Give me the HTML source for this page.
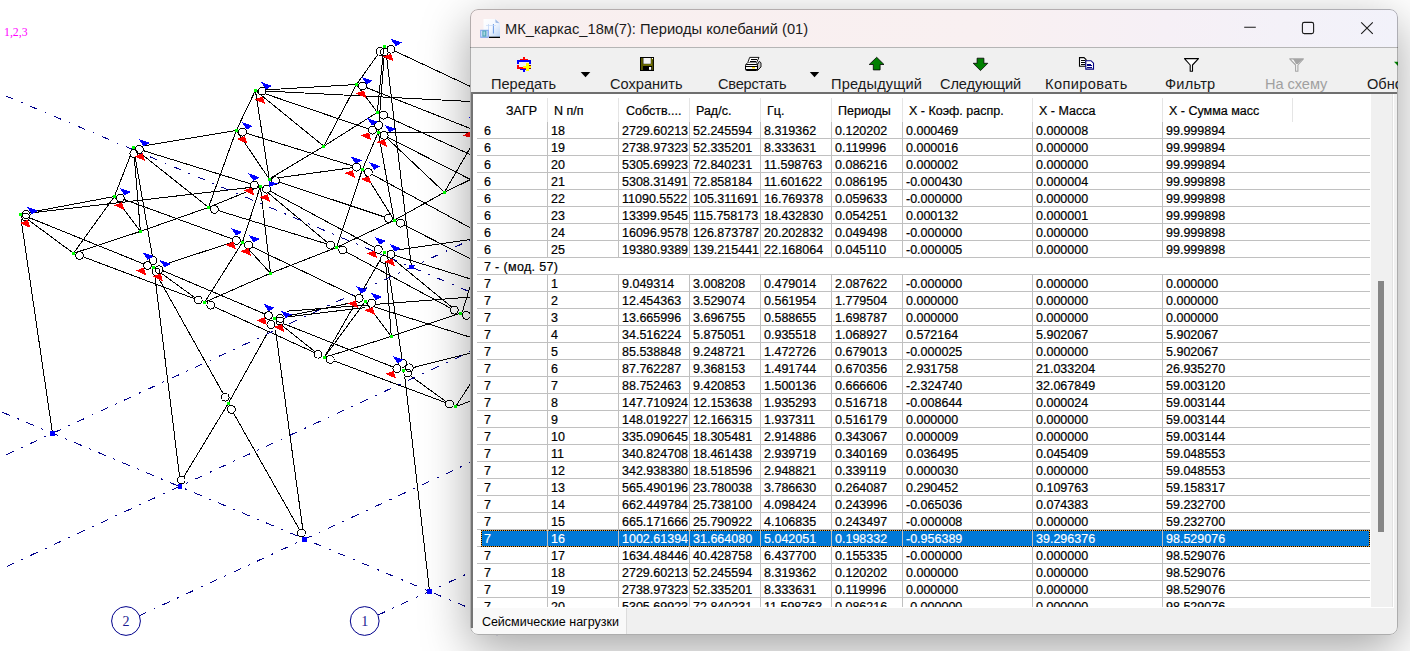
<!DOCTYPE html>
<html><head><meta charset="utf-8">
<style>
html,body{margin:0;padding:0;}
body{width:1410px;height:651px;overflow:hidden;background:#fff;position:relative;font-family:"Liberation Sans",sans-serif;}
#wire{position:absolute;left:0;top:0;width:1410px;height:651px;}
#dlg{position:absolute;left:470px;top:9px;width:927.8px;height:625.6px;border-radius:8px;background:#f0f0f0;
 box-shadow:0 14px 48px rgba(0,0,0,0.36);overflow:hidden;}
#title{position:absolute;left:0;top:0;width:926px;height:38px;background:linear-gradient(90deg,#f9efef 0%,#f9f0f1 55%,#f6f0f6 75%,#f2f2fa 100%);}
#title .t{position:absolute;left:34px;top:10px;font-size:15.2px;color:#1b1b1b;white-space:nowrap;line-height:18px;}
#tb{position:absolute;left:0;top:38px;width:926px;height:45px;background:#f0f0f0;border-top:1px solid #d9d9d9;box-sizing:border-box}
.btn{position:absolute;top:0;font-size:14.6px;color:#1a1a1a;white-space:nowrap;line-height:16px;}
.btn span{position:absolute;top:29px;left:0}
#list{position:absolute;left:0;top:83px;width:921px;height:515px;background:#fff;border-left:2px solid #6f6f6f;border-top:2px solid #6f6f6f;box-sizing:border-box;}
#abs{position:absolute;left:-470px;top:-9px;width:1410px;height:651px;}
#clip{position:absolute;left:473px;top:94px;width:898px;height:513px;overflow:hidden;}
#clip .in{position:absolute;left:-473px;top:-94px;width:1410px;height:651px;}
.r{z-index:0;position:absolute;left:0;width:1371px;height:16px;font-size:12.5px;line-height:16px;color:#000;}
.r .c{top:1px}
.g{z-index:2;position:absolute;left:477px;width:893px;height:16px;background:#fff}
.c{position:absolute;top:0;height:16px;overflow:hidden;white-space:nowrap;-webkit-text-stroke:0.2px currentColor;}
.sel{color:#fff;}
.selbg{z-index:-1;position:absolute;left:481px;top:0;width:889px;height:17px;background:#0078d7;box-shadow:inset 0 0 0 1px #f0a030;outline:1px dotted #000;outline-offset:-1px}
.hl{position:absolute;left:477px;width:893px;height:1px;background:#c0c0c0;}
.vl{z-index:1;position:absolute;top:122px;width:1px;height:490px;background:#c0c0c0;}
.vh{position:absolute;top:98px;width:1px;height:24px;background:#e5e5e5;}
.h{-webkit-text-stroke:0.2px #000;position:absolute;top:103px;font-size:12.5px;line-height:16px;color:#000;white-space:nowrap}
#sb{position:absolute;left:1371px;top:94px;width:21px;height:513px;background:#f0f0f0;}
#thumb{position:absolute;left:1378px;top:281px;width:6px;height:251px;background:#868686;}
#status{position:absolute;left:472.9px;top:608px;width:153px;height:26px;background:#f9f9f9;border-right:1px solid #dcdcdc;font-size:12.5px;line-height:16px;color:#000;}
</style></head><body>
<svg id="wire" width="1410" height="651" viewBox="0 0 1410 651">
<g stroke="#000" stroke-width="1" fill="none" shape-rendering="crispEdges">
<path d="M133.5 147.6L236.3 130.4"/>
<path d="M133.5 147.6L114.4 196.5"/>
<path d="M133.5 147.6L140.4 231.4"/>
<path d="M133.5 147.6L153.1 260.4"/>
<path d="M133.5 147.6L208.5 207.4"/>
<path d="M133.5 147.6L254.3 185.0"/>
<path d="M236.3 130.4L255.4 90.5"/>
<path d="M236.3 130.4L208.5 207.4"/>
<path d="M236.3 130.4L269.2 179.0"/>
<path d="M242.5 132.1L356.5 167.1"/>
<path d="M255.4 90.5L356.5 84.5"/>
<path d="M255.4 90.5L470.6 101.5"/>
<path d="M255.4 90.5L372.5 130.3"/>
<path d="M255.4 90.5L323.8 146.2"/>
<path d="M255.4 90.5L269.2 179.0"/>
<path d="M356.5 84.5L380.1 51.4"/>
<path d="M356.5 84.5L323.8 146.2"/>
<path d="M362.6 86.1L470.6 128.6"/>
<path d="M356.5 84.5L377.3 112.4"/>
<path d="M377.3 112.4L323.8 146.2"/>
<path d="M323.8 146.2L269.2 179.0"/>
<path d="M383.3 52.0L377.3 112.4"/>
<path d="M384.5 52.0L378.3 132.3"/>
<path d="M386.5 56.0L411.5 267.2"/>
<path d="M390.9 49.2L470.5 86.5"/>
<path d="M378.3 132.3L470.5 132.4"/>
<path d="M383.5 115.2L470.5 154.6"/>
<path d="M384.2 135.4L444.4 192.3"/>
<path d="M384.2 135.4L471.0 179.8"/>
<path d="M444.4 192.3L470.5 147.2"/>
<path d="M444.4 192.3L470.5 179.6"/>
<path d="M444.4 192.3L394.2 220.3"/>
<path d="M378.3 132.3L362.4 169.4"/>
<path d="M362.4 169.4L336.4 247.5"/>
<path d="M378.3 132.3L394.2 220.3"/>
<path d="M368.3 172.3L471.3 228.4"/>
<path d="M362.4 169.4L394.2 220.3"/>
<path d="M269.2 179.0L356.5 167.1"/>
<path d="M275.4 180.7L388.4 218.3"/>
<path d="M266.6 189.2L378.3 249.4"/>
<path d="M260.3 186.3L330.5 245.1"/>
<path d="M260.3 186.3L242.4 242.4"/>
<path d="M242.4 242.4L204.7 302.2"/>
<path d="M260.3 186.3L270.5 273.3"/>
<path d="M20.5 214.1L114.4 196.5"/>
<path d="M20.5 214.1L260.3 186.3"/>
<path d="M20.5 214.1L147.5 265.5"/>
<path d="M20.5 214.1L73.5 253.3"/>
<path d="M21.1 219.5L52.5 433.3"/>
<path d="M114.4 196.5L73.5 253.3"/>
<path d="M114.4 196.5L140.4 231.4"/>
<path d="M120.3 198.1L236.4 240.4"/>
<path d="M73.5 253.3L140.4 231.4"/>
<path d="M140.4 231.4L208.5 207.4"/>
<path d="M208.5 207.4L260.3 186.3"/>
<path d="M79.6 255.5L198.2 300.1"/>
<path d="M214.4 209.4L330.5 245.1"/>
<path d="M166.0 264.0L236.0 241.0"/>
<path d="M153.4 267.5L198.2 300.1"/>
<path d="M162.4 270.5L268.5 315.5"/>
<path d="M154.6 274.0L180.0 480.0"/>
<path d="M159.0 279.0L225.2 397.2"/>
<path d="M204.7 302.2L270.5 273.3"/>
<path d="M270.5 273.3L336.4 247.5"/>
<path d="M336.4 247.5L394.2 220.3"/>
<path d="M210.8 305.2L318.1 354.2"/>
<path d="M248.6 245.1L359.2 298.3"/>
<path d="M242.4 242.4L270.5 273.3"/>
<path d="M342.7 250.0L454.3 310.2"/>
<path d="M400.5 223.2L471.3 259.3"/>
<path d="M399.0 249.7L471.3 239.4"/>
<path d="M390.9 254.2L471.3 279.2"/>
<path d="M391.6 257.8L456.5 311.0"/>
<path d="M384.4 252.5L324.2 357.5"/>
<path d="M385.4 258.6L391.3 336.4"/>
<path d="M386.8 258.6L402.7 363.3"/>
<path d="M287.4 316.0L356.7 301.7"/>
<path d="M287.4 316.9L365.0 307.6"/>
<path d="M287.0 311.2L471.3 297.0"/>
<path d="M365.2 301.6L324.2 357.5"/>
<path d="M365.2 301.6L391.3 336.4"/>
<path d="M375.4 307.3L471.3 337.5"/>
<path d="M280.6 322.5L396.8 368.5"/>
<path d="M279.0 323.0L318.1 354.2"/>
<path d="M275.5 330.0L303.8 536.5"/>
<path d="M268.2 331.7L228.2 403.5"/>
<path d="M228.2 403.5L183.7 477.0"/>
<path d="M231.4 409.4L301.4 533.0"/>
<path d="M324.2 357.5L391.3 336.4"/>
<path d="M391.3 336.4L460.5 313.2"/>
<path d="M330.3 359.5L449.4 404.0"/>
<path d="M408.6 374.5L449.4 404.0"/>
<path d="M412.3 367.8L470.7 353.0"/>
<path d="M404.8 377.0L429.3 589.0"/>
<path d="M455.5 406.7L470.7 383.4"/>
<path d="M455.5 406.7L470.7 401.0"/>
<path d="M462.4 311.7L470.5 285.2"/>
</g>
<g stroke="#00008b" stroke-width="1" fill="none" stroke-dasharray="8 8 2 8" shape-rendering="crispEdges">
<path d="M6.0 96.0L471.0 292.3"/>
<path d="M6.3 454.7L471.3 239.5"/>
<path d="M2.5 412.3L471.3 608.9"/>
<path d="M6.6 566.5L470.7 351.5"/>
<path d="M139.0 615.8L471.0 462.2"/>
<path d="M377.7 615.2L471.3 571.9"/>
</g>
<g stroke="#000" stroke-width="1" fill="#fff" shape-rendering="crispEdges">
<circle cx="139.4" cy="149.4" r="3.9" stroke="none"/>
<circle cx="133.8" cy="153.6" r="3.9" stroke="none"/>
<circle cx="120.3" cy="198.1" r="3.9" stroke="none"/>
<circle cx="26.2" cy="214.5" r="3.9" stroke="none"/>
<circle cx="25.7" cy="217.0" r="3.9" stroke="none"/>
<circle cx="242.5" cy="132.1" r="3.9" stroke="none"/>
<circle cx="262.1" cy="91.1" r="3.9" stroke="none"/>
<circle cx="362.6" cy="86.1" r="3.9" stroke="none"/>
<circle cx="380.1" cy="51.4" r="3.9" stroke="none"/>
<circle cx="390.9" cy="49.2" r="3.9" stroke="none"/>
<circle cx="384.2" cy="52.1" r="3.9" stroke="none"/>
<circle cx="383.5" cy="115.2" r="3.9" stroke="none"/>
<circle cx="372.4" cy="130.2" r="3.9" stroke="none"/>
<circle cx="378.6" cy="125.4" r="3.9" stroke="none"/>
<circle cx="384.2" cy="135.4" r="3.9" stroke="none"/>
<circle cx="356.5" cy="167.1" r="3.9" stroke="none"/>
<circle cx="368.3" cy="172.3" r="3.9" stroke="none"/>
<circle cx="254.3" cy="185.0" r="3.9" stroke="none"/>
<circle cx="275.4" cy="180.7" r="3.9" stroke="none"/>
<circle cx="266.6" cy="189.2" r="3.9" stroke="none"/>
<circle cx="388.4" cy="218.3" r="3.9" stroke="none"/>
<circle cx="400.5" cy="223.2" r="3.9" stroke="none"/>
<circle cx="330.5" cy="245.1" r="3.9" stroke="none"/>
<circle cx="342.7" cy="250.0" r="3.9" stroke="none"/>
<circle cx="378.3" cy="249.4" r="3.9" stroke="none"/>
<circle cx="390.9" cy="254.2" r="3.9" stroke="none"/>
<circle cx="384.2" cy="259.3" r="3.9" stroke="none"/>
<circle cx="236.4" cy="240.4" r="3.9" stroke="none"/>
<circle cx="248.6" cy="245.1" r="3.9" stroke="none"/>
<circle cx="359.2" cy="298.3" r="3.9" stroke="none"/>
<circle cx="371.6" cy="303.3" r="3.9" stroke="none"/>
<circle cx="268.5" cy="315.5" r="3.9" stroke="none"/>
<circle cx="270.9" cy="324.5" r="3.9" stroke="none"/>
<circle cx="280.3" cy="318.5" r="3.9" stroke="none"/>
<circle cx="280.0" cy="321.0" r="3.9" stroke="none"/>
<circle cx="454.3" cy="310.2" r="3.9" stroke="none"/>
<circle cx="466.4" cy="315.4" r="3.9" stroke="none"/>
<circle cx="79.6" cy="255.5" r="3.9" stroke="none"/>
<circle cx="147.5" cy="265.5" r="3.9" stroke="none"/>
<circle cx="153.1" cy="260.4" r="3.9" stroke="none"/>
<circle cx="159.0" cy="269.7" r="3.9" stroke="none"/>
<circle cx="156.0" cy="271.9" r="3.9" stroke="none"/>
<circle cx="214.4" cy="209.4" r="3.9" stroke="none"/>
<circle cx="198.2" cy="300.1" r="3.9" stroke="none"/>
<circle cx="210.8" cy="305.2" r="3.9" stroke="none"/>
<circle cx="318.1" cy="354.2" r="3.9" stroke="none"/>
<circle cx="330.3" cy="359.5" r="3.9" stroke="none"/>
<circle cx="396.8" cy="368.5" r="3.9" stroke="none"/>
<circle cx="402.7" cy="363.3" r="3.9" stroke="none"/>
<circle cx="409.3" cy="367.8" r="3.9" stroke="none"/>
<circle cx="407.8" cy="372.9" r="3.9" stroke="none"/>
<circle cx="449.4" cy="404.0" r="3.9" stroke="none"/>
<circle cx="225.2" cy="397.2" r="3.9" stroke="none"/>
<circle cx="231.4" cy="409.4" r="3.9" stroke="none"/>
<circle cx="181.2" cy="480.0" r="3.9" stroke="none"/>
<circle cx="301.4" cy="533.0" r="3.9" stroke="none"/>
<circle cx="139.4" cy="149.4" r="3.9" fill="none"/>
<circle cx="133.8" cy="153.6" r="3.9" fill="none"/>
<circle cx="120.3" cy="198.1" r="3.9" fill="none"/>
<circle cx="26.2" cy="214.5" r="3.9" fill="none"/>
<circle cx="25.7" cy="217.0" r="3.9" fill="none"/>
<circle cx="242.5" cy="132.1" r="3.9" fill="none"/>
<circle cx="262.1" cy="91.1" r="3.9" fill="none"/>
<circle cx="362.6" cy="86.1" r="3.9" fill="none"/>
<circle cx="380.1" cy="51.4" r="3.9" fill="none"/>
<circle cx="390.9" cy="49.2" r="3.9" fill="none"/>
<circle cx="384.2" cy="52.1" r="3.9" fill="none"/>
<circle cx="383.5" cy="115.2" r="3.9" fill="none"/>
<circle cx="372.4" cy="130.2" r="3.9" fill="none"/>
<circle cx="378.6" cy="125.4" r="3.9" fill="none"/>
<circle cx="384.2" cy="135.4" r="3.9" fill="none"/>
<circle cx="356.5" cy="167.1" r="3.9" fill="none"/>
<circle cx="368.3" cy="172.3" r="3.9" fill="none"/>
<circle cx="254.3" cy="185.0" r="3.9" fill="none"/>
<circle cx="275.4" cy="180.7" r="3.9" fill="none"/>
<circle cx="266.6" cy="189.2" r="3.9" fill="none"/>
<circle cx="388.4" cy="218.3" r="3.9" fill="none"/>
<circle cx="400.5" cy="223.2" r="3.9" fill="none"/>
<circle cx="330.5" cy="245.1" r="3.9" fill="none"/>
<circle cx="342.7" cy="250.0" r="3.9" fill="none"/>
<circle cx="378.3" cy="249.4" r="3.9" fill="none"/>
<circle cx="390.9" cy="254.2" r="3.9" fill="none"/>
<circle cx="384.2" cy="259.3" r="3.9" fill="none"/>
<circle cx="236.4" cy="240.4" r="3.9" fill="none"/>
<circle cx="248.6" cy="245.1" r="3.9" fill="none"/>
<circle cx="359.2" cy="298.3" r="3.9" fill="none"/>
<circle cx="371.6" cy="303.3" r="3.9" fill="none"/>
<circle cx="268.5" cy="315.5" r="3.9" fill="none"/>
<circle cx="270.9" cy="324.5" r="3.9" fill="none"/>
<circle cx="280.3" cy="318.5" r="3.9" fill="none"/>
<circle cx="280.0" cy="321.0" r="3.9" fill="none"/>
<circle cx="454.3" cy="310.2" r="3.9" fill="none"/>
<circle cx="466.4" cy="315.4" r="3.9" fill="none"/>
<circle cx="79.6" cy="255.5" r="3.9" fill="none"/>
<circle cx="147.5" cy="265.5" r="3.9" fill="none"/>
<circle cx="153.1" cy="260.4" r="3.9" fill="none"/>
<circle cx="159.0" cy="269.7" r="3.9" fill="none"/>
<circle cx="156.0" cy="271.9" r="3.9" fill="none"/>
<circle cx="214.4" cy="209.4" r="3.9" fill="none"/>
<circle cx="198.2" cy="300.1" r="3.9" fill="none"/>
<circle cx="210.8" cy="305.2" r="3.9" fill="none"/>
<circle cx="318.1" cy="354.2" r="3.9" fill="none"/>
<circle cx="330.3" cy="359.5" r="3.9" fill="none"/>
<circle cx="396.8" cy="368.5" r="3.9" fill="none"/>
<circle cx="402.7" cy="363.3" r="3.9" fill="none"/>
<circle cx="409.3" cy="367.8" r="3.9" fill="none"/>
<circle cx="407.8" cy="372.9" r="3.9" fill="none"/>
<circle cx="449.4" cy="404.0" r="3.9" fill="none"/>
<circle cx="225.2" cy="397.2" r="3.9" fill="none"/>
<circle cx="231.4" cy="409.4" r="3.9" fill="none"/>
<circle cx="181.2" cy="480.0" r="3.9" fill="none"/>
<circle cx="301.4" cy="533.0" r="3.9" fill="none"/>
</g>
<g fill="#0000ff" shape-rendering="crispEdges">
<path d="M138.5 138.8L149.8 142.8L143.7 146.4Z"/>
<path d="M119.5 187.8L130.8 191.8L124.7 195.4Z"/>
<path d="M26.6 206.7L37.9 210.7L31.8 214.3Z"/>
<path d="M241.6 122.0L252.9 126.0L246.8 129.6Z"/>
<path d="M260.8 81.9L272.1 85.9L266.0 89.5Z"/>
<path d="M361.4 76.8L372.7 80.8L366.6 84.4Z"/>
<path d="M390.5 38.6L401.8 42.6L395.7 46.2Z"/>
<path d="M366.9 117.9L378.2 121.9L372.1 125.5Z"/>
<path d="M384.6 124.9L395.9 128.9L389.8 132.5Z"/>
<path d="M350.6 156.3L361.9 160.3L355.8 163.9Z"/>
<path d="M369.1 162.2L380.4 166.2L374.3 169.8Z"/>
<path d="M248.3 173.3L259.6 177.3L253.5 180.9Z"/>
<path d="M231.0 228.0L242.3 232.0L236.2 235.6Z"/>
<path d="M248.5 234.8L259.8 238.8L253.7 242.4Z"/>
<path d="M374.7 237.0L386.0 241.0L379.9 244.6Z"/>
<path d="M389.7 244.1L401.0 248.1L394.9 251.7Z"/>
<path d="M356.0 286.0L367.3 290.0L361.2 293.6Z"/>
<path d="M370.6 292.7L381.9 296.7L375.8 300.3Z"/>
<path d="M263.4 303.7L274.7 307.7L268.6 311.3Z"/>
<path d="M280.6 310.5L291.9 314.5L285.8 318.1Z"/>
<path d="M142.5 252.3L153.8 256.3L147.7 259.9Z"/>
<path d="M159.4 259.9L170.7 263.9L164.6 267.5Z"/>
<path d="M392.4 355.8L403.7 359.8L397.6 363.4Z"/>
<path d="M268.6 181L278 183.6L268.6 187Z"/><path d="M469 116.5L472 118L472 123.5Z"/>
</g>
<g fill="#ff0000" shape-rendering="crispEdges">
<path d="M462.6 135.6L471.5 130.7L471.5 138Z"/>
<path d="M134.5 156.3L142.6 153.3L145.1 161.1Z"/>
<path d="M113.9 205.3L122.0 202.3L124.5 210.1Z"/>
<path d="M19.7 223.0L27.8 220.0L30.3 227.8Z"/>
<path d="M236.8 139.0L244.9 136.0L247.4 143.8Z"/>
<path d="M254.7 99.4L262.8 96.4L265.3 104.2Z"/>
<path d="M355.8 93.4L363.9 90.4L366.4 98.2Z"/>
<path d="M382.9 56.6L391.0 53.6L393.5 61.4Z"/>
<path d="M360.8 135.5L368.9 132.5L371.4 140.3Z"/>
<path d="M376.6 142.1L384.7 139.1L387.2 146.9Z"/>
<path d="M344.6 173.1L352.7 170.1L355.2 177.9Z"/>
<path d="M360.8 179.0L368.9 176.0L371.4 183.8Z"/>
<path d="M243.6 190.5L251.7 187.5L254.2 195.3Z"/>
<path d="M259.6 197.2L267.7 194.2L270.2 202.0Z"/>
<path d="M225.4 244.7L233.5 241.7L236.0 249.5Z"/>
<path d="M240.4 251.1L248.5 248.1L251.0 255.9Z"/>
<path d="M366.7 253.5L374.8 250.5L377.3 258.3Z"/>
<path d="M384.4 261.6L392.5 258.6L395.0 266.4Z"/>
<path d="M347.6 303.4L355.7 300.4L358.2 308.2Z"/>
<path d="M364.5 310.2L372.6 307.2L375.1 315.0Z"/>
<path d="M256.4 320.3L264.5 317.3L267.0 325.1Z"/>
<path d="M273.7 327.1L281.8 324.1L284.3 331.9Z"/>
<path d="M135.6 270.6L143.7 267.6L146.2 275.4Z"/>
<path d="M152.5 276.6L160.6 273.6L163.1 281.4Z"/>
<path d="M385.4 373.8L393.5 370.8L396.0 378.6Z"/>
</g>
<g fill="#00ff00" shape-rendering="crispEdges">
<rect x="132.0" y="146.1" width="3" height="3"/>
<rect x="112.9" y="195.0" width="3" height="3"/>
<rect x="19.0" y="212.6" width="3" height="3"/>
<rect x="138.9" y="229.9" width="3" height="3"/>
<rect x="72.0" y="251.8" width="3" height="3"/>
<rect x="151.9" y="266.0" width="3" height="3"/>
<rect x="207.0" y="205.9" width="3" height="3"/>
<rect x="203.2" y="300.7" width="3" height="3"/>
<rect x="234.8" y="128.9" width="3" height="3"/>
<rect x="253.9" y="89.0" width="3" height="3"/>
<rect x="355.0" y="83.0" width="3" height="3"/>
<rect x="382.7" y="44.8" width="3" height="3"/>
<rect x="375.8" y="110.9" width="3" height="3"/>
<rect x="376.8" y="130.8" width="3" height="3"/>
<rect x="322.3" y="144.7" width="3" height="3"/>
<rect x="258.8" y="184.8" width="3" height="3"/>
<rect x="267.7" y="177.5" width="3" height="3"/>
<rect x="360.9" y="167.9" width="3" height="3"/>
<rect x="442.9" y="190.8" width="3" height="3"/>
<rect x="392.7" y="218.8" width="3" height="3"/>
<rect x="334.9" y="246.0" width="3" height="3"/>
<rect x="382.9" y="251.0" width="3" height="3"/>
<rect x="240.9" y="240.9" width="3" height="3"/>
<rect x="269.0" y="271.8" width="3" height="3"/>
<rect x="363.7" y="300.1" width="3" height="3"/>
<rect x="272.8" y="317.0" width="3" height="3"/>
<rect x="459.0" y="311.7" width="3" height="3"/>
<rect x="322.7" y="356.0" width="3" height="3"/>
<rect x="389.8" y="334.9" width="3" height="3"/>
<rect x="401.9" y="369.0" width="3" height="3"/>
<rect x="454.0" y="405.2" width="3" height="3"/>
<rect x="226.7" y="402.0" width="3" height="3"/>
</g>
<g fill="#0000ff" shape-rendering="crispEdges">
<rect x="50.3" y="431.1" width="4.4" height="4.4"/>
<rect x="177.8" y="484.1" width="4.4" height="4.4"/>
<rect x="302.1" y="537.1" width="4.4" height="4.4"/>
<rect x="427.1" y="589.1" width="4.4" height="4.4"/>
<rect x="409.3" y="265.0" width="4.4" height="4.4"/>
</g>
<g stroke="#00008b" stroke-width="1" fill="#fff"><circle cx="497" cy="620.3" r="14.4"/><circle cx="126" cy="621" r="14.4"/><circle cx="364.7" cy="621" r="14.4"/></g>
<g font-family="Liberation Serif, serif" font-size="14" fill="#1a1a90" text-anchor="middle"><text x="126" y="626">2</text><text x="364.7" y="626">1</text></g>
<text x="4" y="36" font-family="Liberation Serif, serif" font-size="11.8" fill="#ff00ff">1,2,3</text>
</svg>
<div id="dlg"><div id="abs">
 <div id="title" style="left:470px;top:9px;height:39px;width:928px"></div>
 <div id="tbar" style="position:absolute;left:470px;top:47px;width:928px;height:45px;background:#f0f0f0;border-top:1px solid #b5b5b5;box-sizing:border-box"></div>
 <div style="position:absolute;left:471px;top:92px;width:926px;height:2px;background:#6f6f6f"></div>
 <div style="position:absolute;left:471.4px;top:92px;width:1.5px;height:536px;background:#747474"></div>
 <div style="position:absolute;left:473px;top:94px;width:898px;height:513px;background:#fff"></div>
 <div id="sb"></div><div id="thumb"></div>
 <div style="position:absolute;left:1392px;top:94px;width:1px;height:513px;background:#e3e3e3"></div>
 <div style="position:absolute;left:1393px;top:94px;width:1px;height:513px;background:#fff"></div>
 <div style="position:absolute;left:473px;top:607px;width:921px;height:1px;background:#fff"></div>
 <div id="clip"><div class="in">
<div class="hl" style="top:138px"></div>
<div class="hl" style="top:155px"></div>
<div class="hl" style="top:172px"></div>
<div class="hl" style="top:189px"></div>
<div class="hl" style="top:206px"></div>
<div class="hl" style="top:223px"></div>
<div class="hl" style="top:240px"></div>
<div class="hl" style="top:257px"></div>
<div class="hl" style="top:274px"></div>
<div class="hl" style="top:291px"></div>
<div class="hl" style="top:308px"></div>
<div class="hl" style="top:325px"></div>
<div class="hl" style="top:342px"></div>
<div class="hl" style="top:359px"></div>
<div class="hl" style="top:376px"></div>
<div class="hl" style="top:393px"></div>
<div class="hl" style="top:410px"></div>
<div class="hl" style="top:427px"></div>
<div class="hl" style="top:444px"></div>
<div class="hl" style="top:461px"></div>
<div class="hl" style="top:478px"></div>
<div class="hl" style="top:495px"></div>
<div class="hl" style="top:512px"></div>
<div class="hl" style="top:529px"></div>
<div class="hl" style="top:546px"></div>
<div class="hl" style="top:563px"></div>
<div class="hl" style="top:580px"></div>
<div class="hl" style="top:597px"></div>
<div class="vl" style="left:547px"></div>
<div class="vh" style="left:547px"></div>
<div class="vl" style="left:618px"></div>
<div class="vh" style="left:618px"></div>
<div class="vl" style="left:689px"></div>
<div class="vh" style="left:689px"></div>
<div class="vl" style="left:760px"></div>
<div class="vh" style="left:760px"></div>
<div class="vl" style="left:831px"></div>
<div class="vh" style="left:831px"></div>
<div class="vl" style="left:902px"></div>
<div class="vh" style="left:902px"></div>
<div class="vl" style="left:1032px"></div>
<div class="vh" style="left:1032px"></div>
<div class="vl" style="left:1162px"></div>
<div class="vh" style="left:1162px"></div>
<div class="vh" style="left:1292px"></div>
<div class="r" style="top:122px"><div class="c" style="left:477px;width:63px;padding-left:7px">6</div><div class="c" style="left:548px;width:67px;padding-left:3px">18</div><div class="c" style="left:619px;width:67px;padding-left:3px">2729.60213</div><div class="c" style="left:690px;width:67px;padding-left:3px">52.245594</div><div class="c" style="left:761px;width:67px;padding-left:3px">8.319362</div><div class="c" style="left:832px;width:67px;padding-left:3px">0.120202</div><div class="c" style="left:903px;width:126px;padding-left:3px">0.000469</div><div class="c" style="left:1033px;width:126px;padding-left:3px">0.000008</div><div class="c" style="left:1163px;width:126px;padding-left:3px">99.999894</div></div>
<div class="r" style="top:139px"><div class="c" style="left:477px;width:63px;padding-left:7px">6</div><div class="c" style="left:548px;width:67px;padding-left:3px">19</div><div class="c" style="left:619px;width:67px;padding-left:3px">2738.97323</div><div class="c" style="left:690px;width:67px;padding-left:3px">52.335201</div><div class="c" style="left:761px;width:67px;padding-left:3px">8.333631</div><div class="c" style="left:832px;width:67px;padding-left:3px">0.119996</div><div class="c" style="left:903px;width:126px;padding-left:3px">0.000016</div><div class="c" style="left:1033px;width:126px;padding-left:3px">0.000000</div><div class="c" style="left:1163px;width:126px;padding-left:3px">99.999894</div></div>
<div class="r" style="top:156px"><div class="c" style="left:477px;width:63px;padding-left:7px">6</div><div class="c" style="left:548px;width:67px;padding-left:3px">20</div><div class="c" style="left:619px;width:67px;padding-left:3px">5305.69923</div><div class="c" style="left:690px;width:67px;padding-left:3px">72.840231</div><div class="c" style="left:761px;width:67px;padding-left:3px">11.598763</div><div class="c" style="left:832px;width:67px;padding-left:3px">0.086216</div><div class="c" style="left:903px;width:126px;padding-left:3px">0.000002</div><div class="c" style="left:1033px;width:126px;padding-left:3px">0.000000</div><div class="c" style="left:1163px;width:126px;padding-left:3px">99.999894</div></div>
<div class="r" style="top:173px"><div class="c" style="left:477px;width:63px;padding-left:7px">6</div><div class="c" style="left:548px;width:67px;padding-left:3px">21</div><div class="c" style="left:619px;width:67px;padding-left:3px">5308.31491</div><div class="c" style="left:690px;width:67px;padding-left:3px">72.858184</div><div class="c" style="left:761px;width:67px;padding-left:3px">11.601622</div><div class="c" style="left:832px;width:67px;padding-left:3px">0.086195</div><div class="c" style="left:903px;width:126px;padding-left:3px">-0.000430</div><div class="c" style="left:1033px;width:126px;padding-left:3px">0.000004</div><div class="c" style="left:1163px;width:126px;padding-left:3px">99.999898</div></div>
<div class="r" style="top:190px"><div class="c" style="left:477px;width:63px;padding-left:7px">6</div><div class="c" style="left:548px;width:67px;padding-left:3px">22</div><div class="c" style="left:619px;width:67px;padding-left:3px">11090.5522</div><div class="c" style="left:690px;width:67px;padding-left:3px">105.311691</div><div class="c" style="left:761px;width:67px;padding-left:3px">16.769378</div><div class="c" style="left:832px;width:67px;padding-left:3px">0.059633</div><div class="c" style="left:903px;width:126px;padding-left:3px">-0.000000</div><div class="c" style="left:1033px;width:126px;padding-left:3px">0.000000</div><div class="c" style="left:1163px;width:126px;padding-left:3px">99.999898</div></div>
<div class="r" style="top:207px"><div class="c" style="left:477px;width:63px;padding-left:7px">6</div><div class="c" style="left:548px;width:67px;padding-left:3px">23</div><div class="c" style="left:619px;width:67px;padding-left:3px">13399.9545</div><div class="c" style="left:690px;width:67px;padding-left:3px">115.758173</div><div class="c" style="left:761px;width:67px;padding-left:3px">18.432830</div><div class="c" style="left:832px;width:67px;padding-left:3px">0.054251</div><div class="c" style="left:903px;width:126px;padding-left:3px">0.000132</div><div class="c" style="left:1033px;width:126px;padding-left:3px">0.000001</div><div class="c" style="left:1163px;width:126px;padding-left:3px">99.999898</div></div>
<div class="r" style="top:224px"><div class="c" style="left:477px;width:63px;padding-left:7px">6</div><div class="c" style="left:548px;width:67px;padding-left:3px">24</div><div class="c" style="left:619px;width:67px;padding-left:3px">16096.9578</div><div class="c" style="left:690px;width:67px;padding-left:3px">126.873787</div><div class="c" style="left:761px;width:67px;padding-left:3px">20.202832</div><div class="c" style="left:832px;width:67px;padding-left:3px">0.049498</div><div class="c" style="left:903px;width:126px;padding-left:3px">-0.000000</div><div class="c" style="left:1033px;width:126px;padding-left:3px">0.000000</div><div class="c" style="left:1163px;width:126px;padding-left:3px">99.999898</div></div>
<div class="r" style="top:241px"><div class="c" style="left:477px;width:63px;padding-left:7px">6</div><div class="c" style="left:548px;width:67px;padding-left:3px">25</div><div class="c" style="left:619px;width:67px;padding-left:3px">19380.9389</div><div class="c" style="left:690px;width:67px;padding-left:3px">139.215441</div><div class="c" style="left:761px;width:67px;padding-left:3px">22.168064</div><div class="c" style="left:832px;width:67px;padding-left:3px">0.045110</div><div class="c" style="left:903px;width:126px;padding-left:3px">-0.000005</div><div class="c" style="left:1033px;width:126px;padding-left:3px">0.000000</div><div class="c" style="left:1163px;width:126px;padding-left:3px">99.999898</div></div>
<div class="g" style="top:258px"></div><div class="r" style="top:258px;z-index:3"><div class="c" style="left:484px;width:400px;letter-spacing:0.35px">7 - (мод. 57)</div></div>
<div class="r" style="top:275px"><div class="c" style="left:477px;width:63px;padding-left:7px">7</div><div class="c" style="left:548px;width:67px;padding-left:3px">1</div><div class="c" style="left:619px;width:67px;padding-left:3px">9.049314</div><div class="c" style="left:690px;width:67px;padding-left:3px">3.008208</div><div class="c" style="left:761px;width:67px;padding-left:3px">0.479014</div><div class="c" style="left:832px;width:67px;padding-left:3px">2.087622</div><div class="c" style="left:903px;width:126px;padding-left:3px">-0.000000</div><div class="c" style="left:1033px;width:126px;padding-left:3px">0.000000</div><div class="c" style="left:1163px;width:126px;padding-left:3px">0.000000</div></div>
<div class="r" style="top:292px"><div class="c" style="left:477px;width:63px;padding-left:7px">7</div><div class="c" style="left:548px;width:67px;padding-left:3px">2</div><div class="c" style="left:619px;width:67px;padding-left:3px">12.454363</div><div class="c" style="left:690px;width:67px;padding-left:3px">3.529074</div><div class="c" style="left:761px;width:67px;padding-left:3px">0.561954</div><div class="c" style="left:832px;width:67px;padding-left:3px">1.779504</div><div class="c" style="left:903px;width:126px;padding-left:3px">0.000000</div><div class="c" style="left:1033px;width:126px;padding-left:3px">0.000000</div><div class="c" style="left:1163px;width:126px;padding-left:3px">0.000000</div></div>
<div class="r" style="top:309px"><div class="c" style="left:477px;width:63px;padding-left:7px">7</div><div class="c" style="left:548px;width:67px;padding-left:3px">3</div><div class="c" style="left:619px;width:67px;padding-left:3px">13.665996</div><div class="c" style="left:690px;width:67px;padding-left:3px">3.696755</div><div class="c" style="left:761px;width:67px;padding-left:3px">0.588655</div><div class="c" style="left:832px;width:67px;padding-left:3px">1.698787</div><div class="c" style="left:903px;width:126px;padding-left:3px">0.000000</div><div class="c" style="left:1033px;width:126px;padding-left:3px">0.000000</div><div class="c" style="left:1163px;width:126px;padding-left:3px">0.000000</div></div>
<div class="r" style="top:326px"><div class="c" style="left:477px;width:63px;padding-left:7px">7</div><div class="c" style="left:548px;width:67px;padding-left:3px">4</div><div class="c" style="left:619px;width:67px;padding-left:3px">34.516224</div><div class="c" style="left:690px;width:67px;padding-left:3px">5.875051</div><div class="c" style="left:761px;width:67px;padding-left:3px">0.935518</div><div class="c" style="left:832px;width:67px;padding-left:3px">1.068927</div><div class="c" style="left:903px;width:126px;padding-left:3px">0.572164</div><div class="c" style="left:1033px;width:126px;padding-left:3px">5.902067</div><div class="c" style="left:1163px;width:126px;padding-left:3px">5.902067</div></div>
<div class="r" style="top:343px"><div class="c" style="left:477px;width:63px;padding-left:7px">7</div><div class="c" style="left:548px;width:67px;padding-left:3px">5</div><div class="c" style="left:619px;width:67px;padding-left:3px">85.538848</div><div class="c" style="left:690px;width:67px;padding-left:3px">9.248721</div><div class="c" style="left:761px;width:67px;padding-left:3px">1.472726</div><div class="c" style="left:832px;width:67px;padding-left:3px">0.679013</div><div class="c" style="left:903px;width:126px;padding-left:3px">-0.000025</div><div class="c" style="left:1033px;width:126px;padding-left:3px">0.000000</div><div class="c" style="left:1163px;width:126px;padding-left:3px">5.902067</div></div>
<div class="r" style="top:360px"><div class="c" style="left:477px;width:63px;padding-left:7px">7</div><div class="c" style="left:548px;width:67px;padding-left:3px">6</div><div class="c" style="left:619px;width:67px;padding-left:3px">87.762287</div><div class="c" style="left:690px;width:67px;padding-left:3px">9.368153</div><div class="c" style="left:761px;width:67px;padding-left:3px">1.491744</div><div class="c" style="left:832px;width:67px;padding-left:3px">0.670356</div><div class="c" style="left:903px;width:126px;padding-left:3px">2.931758</div><div class="c" style="left:1033px;width:126px;padding-left:3px">21.033204</div><div class="c" style="left:1163px;width:126px;padding-left:3px">26.935270</div></div>
<div class="r" style="top:377px"><div class="c" style="left:477px;width:63px;padding-left:7px">7</div><div class="c" style="left:548px;width:67px;padding-left:3px">7</div><div class="c" style="left:619px;width:67px;padding-left:3px">88.752463</div><div class="c" style="left:690px;width:67px;padding-left:3px">9.420853</div><div class="c" style="left:761px;width:67px;padding-left:3px">1.500136</div><div class="c" style="left:832px;width:67px;padding-left:3px">0.666606</div><div class="c" style="left:903px;width:126px;padding-left:3px">-2.324740</div><div class="c" style="left:1033px;width:126px;padding-left:3px">32.067849</div><div class="c" style="left:1163px;width:126px;padding-left:3px">59.003120</div></div>
<div class="r" style="top:394px"><div class="c" style="left:477px;width:63px;padding-left:7px">7</div><div class="c" style="left:548px;width:67px;padding-left:3px">8</div><div class="c" style="left:619px;width:67px;padding-left:3px">147.710924</div><div class="c" style="left:690px;width:67px;padding-left:3px">12.153638</div><div class="c" style="left:761px;width:67px;padding-left:3px">1.935293</div><div class="c" style="left:832px;width:67px;padding-left:3px">0.516718</div><div class="c" style="left:903px;width:126px;padding-left:3px">-0.008644</div><div class="c" style="left:1033px;width:126px;padding-left:3px">0.000024</div><div class="c" style="left:1163px;width:126px;padding-left:3px">59.003144</div></div>
<div class="r" style="top:411px"><div class="c" style="left:477px;width:63px;padding-left:7px">7</div><div class="c" style="left:548px;width:67px;padding-left:3px">9</div><div class="c" style="left:619px;width:67px;padding-left:3px">148.019227</div><div class="c" style="left:690px;width:67px;padding-left:3px">12.166315</div><div class="c" style="left:761px;width:67px;padding-left:3px">1.937311</div><div class="c" style="left:832px;width:67px;padding-left:3px">0.516179</div><div class="c" style="left:903px;width:126px;padding-left:3px">0.000000</div><div class="c" style="left:1033px;width:126px;padding-left:3px">0.000000</div><div class="c" style="left:1163px;width:126px;padding-left:3px">59.003144</div></div>
<div class="r" style="top:428px"><div class="c" style="left:477px;width:63px;padding-left:7px">7</div><div class="c" style="left:548px;width:67px;padding-left:3px">10</div><div class="c" style="left:619px;width:67px;padding-left:3px">335.090645</div><div class="c" style="left:690px;width:67px;padding-left:3px">18.305481</div><div class="c" style="left:761px;width:67px;padding-left:3px">2.914886</div><div class="c" style="left:832px;width:67px;padding-left:3px">0.343067</div><div class="c" style="left:903px;width:126px;padding-left:3px">0.000009</div><div class="c" style="left:1033px;width:126px;padding-left:3px">0.000000</div><div class="c" style="left:1163px;width:126px;padding-left:3px">59.003144</div></div>
<div class="r" style="top:445px"><div class="c" style="left:477px;width:63px;padding-left:7px">7</div><div class="c" style="left:548px;width:67px;padding-left:3px">11</div><div class="c" style="left:619px;width:67px;padding-left:3px">340.824708</div><div class="c" style="left:690px;width:67px;padding-left:3px">18.461438</div><div class="c" style="left:761px;width:67px;padding-left:3px">2.939719</div><div class="c" style="left:832px;width:67px;padding-left:3px">0.340169</div><div class="c" style="left:903px;width:126px;padding-left:3px">0.036495</div><div class="c" style="left:1033px;width:126px;padding-left:3px">0.045409</div><div class="c" style="left:1163px;width:126px;padding-left:3px">59.048553</div></div>
<div class="r" style="top:462px"><div class="c" style="left:477px;width:63px;padding-left:7px">7</div><div class="c" style="left:548px;width:67px;padding-left:3px">12</div><div class="c" style="left:619px;width:67px;padding-left:3px">342.938380</div><div class="c" style="left:690px;width:67px;padding-left:3px">18.518596</div><div class="c" style="left:761px;width:67px;padding-left:3px">2.948821</div><div class="c" style="left:832px;width:67px;padding-left:3px">0.339119</div><div class="c" style="left:903px;width:126px;padding-left:3px">0.000030</div><div class="c" style="left:1033px;width:126px;padding-left:3px">0.000000</div><div class="c" style="left:1163px;width:126px;padding-left:3px">59.048553</div></div>
<div class="r" style="top:479px"><div class="c" style="left:477px;width:63px;padding-left:7px">7</div><div class="c" style="left:548px;width:67px;padding-left:3px">13</div><div class="c" style="left:619px;width:67px;padding-left:3px">565.490196</div><div class="c" style="left:690px;width:67px;padding-left:3px">23.780038</div><div class="c" style="left:761px;width:67px;padding-left:3px">3.786630</div><div class="c" style="left:832px;width:67px;padding-left:3px">0.264087</div><div class="c" style="left:903px;width:126px;padding-left:3px">0.290452</div><div class="c" style="left:1033px;width:126px;padding-left:3px">0.109763</div><div class="c" style="left:1163px;width:126px;padding-left:3px">59.158317</div></div>
<div class="r" style="top:496px"><div class="c" style="left:477px;width:63px;padding-left:7px">7</div><div class="c" style="left:548px;width:67px;padding-left:3px">14</div><div class="c" style="left:619px;width:67px;padding-left:3px">662.449784</div><div class="c" style="left:690px;width:67px;padding-left:3px">25.738100</div><div class="c" style="left:761px;width:67px;padding-left:3px">4.098424</div><div class="c" style="left:832px;width:67px;padding-left:3px">0.243996</div><div class="c" style="left:903px;width:126px;padding-left:3px">-0.065036</div><div class="c" style="left:1033px;width:126px;padding-left:3px">0.074383</div><div class="c" style="left:1163px;width:126px;padding-left:3px">59.232700</div></div>
<div class="r" style="top:513px"><div class="c" style="left:477px;width:63px;padding-left:7px">7</div><div class="c" style="left:548px;width:67px;padding-left:3px">15</div><div class="c" style="left:619px;width:67px;padding-left:3px">665.171666</div><div class="c" style="left:690px;width:67px;padding-left:3px">25.790922</div><div class="c" style="left:761px;width:67px;padding-left:3px">4.106835</div><div class="c" style="left:832px;width:67px;padding-left:3px">0.243497</div><div class="c" style="left:903px;width:126px;padding-left:3px">-0.000008</div><div class="c" style="left:1033px;width:126px;padding-left:3px">0.000000</div><div class="c" style="left:1163px;width:126px;padding-left:3px">59.232700</div></div>
<div class="r sel" style="top:530px"><div class="selbg"></div><div class="c" style="left:477px;width:63px;padding-left:7px">7</div><div class="c" style="left:548px;width:67px;padding-left:3px">16</div><div class="c" style="left:619px;width:67px;padding-left:3px">1002.61394</div><div class="c" style="left:690px;width:67px;padding-left:3px">31.664080</div><div class="c" style="left:761px;width:67px;padding-left:3px">5.042051</div><div class="c" style="left:832px;width:67px;padding-left:3px">0.198332</div><div class="c" style="left:903px;width:126px;padding-left:3px">-0.956389</div><div class="c" style="left:1033px;width:126px;padding-left:3px">39.296376</div><div class="c" style="left:1163px;width:126px;padding-left:3px">98.529076</div></div>
<div class="r" style="top:547px"><div class="c" style="left:477px;width:63px;padding-left:7px">7</div><div class="c" style="left:548px;width:67px;padding-left:3px">17</div><div class="c" style="left:619px;width:67px;padding-left:3px">1634.48446</div><div class="c" style="left:690px;width:67px;padding-left:3px">40.428758</div><div class="c" style="left:761px;width:67px;padding-left:3px">6.437700</div><div class="c" style="left:832px;width:67px;padding-left:3px">0.155335</div><div class="c" style="left:903px;width:126px;padding-left:3px">-0.000000</div><div class="c" style="left:1033px;width:126px;padding-left:3px">0.000000</div><div class="c" style="left:1163px;width:126px;padding-left:3px">98.529076</div></div>
<div class="r" style="top:564px"><div class="c" style="left:477px;width:63px;padding-left:7px">7</div><div class="c" style="left:548px;width:67px;padding-left:3px">18</div><div class="c" style="left:619px;width:67px;padding-left:3px">2729.60213</div><div class="c" style="left:690px;width:67px;padding-left:3px">52.245594</div><div class="c" style="left:761px;width:67px;padding-left:3px">8.319362</div><div class="c" style="left:832px;width:67px;padding-left:3px">0.120202</div><div class="c" style="left:903px;width:126px;padding-left:3px">0.000000</div><div class="c" style="left:1033px;width:126px;padding-left:3px">0.000000</div><div class="c" style="left:1163px;width:126px;padding-left:3px">98.529076</div></div>
<div class="r" style="top:581px"><div class="c" style="left:477px;width:63px;padding-left:7px">7</div><div class="c" style="left:548px;width:67px;padding-left:3px">19</div><div class="c" style="left:619px;width:67px;padding-left:3px">2738.97323</div><div class="c" style="left:690px;width:67px;padding-left:3px">52.335201</div><div class="c" style="left:761px;width:67px;padding-left:3px">8.333631</div><div class="c" style="left:832px;width:67px;padding-left:3px">0.119996</div><div class="c" style="left:903px;width:126px;padding-left:3px">0.000000</div><div class="c" style="left:1033px;width:126px;padding-left:3px">0.000000</div><div class="c" style="left:1163px;width:126px;padding-left:3px">98.529076</div></div>
<div class="r" style="top:598px"><div class="c" style="left:477px;width:63px;padding-left:7px">7</div><div class="c" style="left:548px;width:67px;padding-left:3px">20</div><div class="c" style="left:619px;width:67px;padding-left:3px">5305.69923</div><div class="c" style="left:690px;width:67px;padding-left:3px">72.840231</div><div class="c" style="left:761px;width:67px;padding-left:3px">11.598763</div><div class="c" style="left:832px;width:67px;padding-left:3px">0.086216</div><div class="c" style="left:903px;width:126px;padding-left:3px">-0.000000</div><div class="c" style="left:1033px;width:126px;padding-left:3px">0.000000</div><div class="c" style="left:1163px;width:126px;padding-left:3px">98.529076</div></div>
 <div class="h" style="left:506px">ЗАГР</div>
 <div class="h" style="left:554px">N п/п</div>
 <div class="h" style="left:626px">Собств....</div>
 <div class="h" style="left:696px">Рад/с.</div>
 <div class="h" style="left:767px">Гц.</div>
 <div class="h" style="left:838px">Периоды</div>
 <div class="h" style="left:909px">X - Коэф. распр.</div>
 <div class="h" style="left:1039px">X - Масса</div>
 <div class="h" style="left:1169px">X - Сумма масс</div>
 </div></div>
 <div id="status"><span style="position:absolute;left:9px;top:6px">Сейсмические нагрузки</span></div>
 <!-- title text -->
 <div style="position:absolute;left:505px;top:20px;font-size:14.7px;line-height:18px;color:#1b1b1b;white-space:nowrap" id="ttext">МК_каркас_18м(7): Периоды колебаний (01)</div>
 <!-- toolbar labels -->
 <div class="btn" id="b1" style="left:491px;top:76px">Передать</div>
 <div class="btn" id="b2" style="left:610px;top:76px">Сохранить</div>
 <div class="btn" id="b3" style="letter-spacing:-0.21px;left:718px;top:76px">Сверстать</div>
 <div class="btn" id="b4" style="letter-spacing:0.15px;left:831px;top:76px">Предыдущий</div>
 <div class="btn" id="b5" style="letter-spacing:-0.1px;left:940px;top:76px">Следующий</div>
 <div class="btn" id="b6" style="letter-spacing:0.41px;left:1045px;top:76px">Копировать</div>
 <div class="btn" id="b7" style="letter-spacing:0.23px;left:1165px;top:76px">Фильтр</div>
 <div class="btn" id="b8" style="letter-spacing:-0.06px;left:1265px;top:76px;color:#a0a0a0">На схему</div>
 <div class="btn" id="b9" style="left:1367px;top:76px">Обновить</div>
 <svg style="position:absolute;left:0;top:0" width="1410" height="651" viewBox="0 0 1410 651" id="icons">
 <defs>
<linearGradient id="docg" x1="0" y1="0" x2="1" y2="1"><stop offset="0" stop-color="#ffffff"/><stop offset="0.5" stop-color="#f4f8ff"/><stop offset="1" stop-color="#b9d3f7"/></linearGradient>
</defs>
<!-- title icon -->
<g>
<path d="M483.5 19 H495.5 L500 23 V37 H483.5 Z" fill="url(#docg)"/>
<path d="M495.3 19.2 L499.6 23.2 L495.6 22.8 Z" fill="#9db9e6"/>
<rect x="489" y="36.7" width="11" height="1.3" fill="#000"/>
<rect x="492.9" y="24" width="1" height="9.5" fill="#6b9be6"/>
<rect x="488" y="24" width="0.8" height="9" fill="#c3d6f5"/>
<rect x="486" y="25" width="10" height="0.7" fill="#c9dbf7"/>
<rect x="480.2" y="29.8" width="8.6" height="8" fill="#7ea4ee"/>
<rect x="481.3" y="30.8" width="6.2" height="5.8" fill="#e8f0ff"/>
<rect x="482.3" y="30.5" width="4.2" height="6.2" fill="#4da3b8"/>
<rect x="483.4" y="31.5" width="1.8" height="4" fill="#a9d6e0"/>
</g>
<!-- btn1 icon -->
<g shape-rendering="crispEdges">
<rect x="523" y="57" width="2" height="2" fill="#f00"/>
<rect x="520.2" y="58.7" width="7.7" height="1.4" fill="#f00"/>
<rect x="517" y="60" width="14" height="2" fill="#00f"/>
<rect x="517" y="60" width="2" height="4.2" fill="#00f"/>
<rect x="529" y="60" width="2" height="4.2" fill="#00f"/>
<rect x="517" y="64.8" width="2" height="4.2" fill="#f00"/>
<rect x="517" y="67" width="9" height="2" fill="#f00"/>
<rect x="529" y="64.8" width="2" height="4.2" fill="#800000"/>
<rect x="520.2" y="68.9" width="7.7" height="1.4" fill="#00f"/>
<rect x="523" y="70" width="2" height="2" fill="#00f"/>
<rect x="526" y="63.2" width="2.5" height="8" fill="#ff0"/>
<rect x="523" y="66" width="8" height="2.3" fill="#ff0"/>
</g>
<path d="M580.7 72 H590.3 L585.5 77.2 Z" fill="#000"/>
<path d="M809.8 72 H819.2 L814.5 77.2 Z" fill="#000"/>
<!-- floppy -->
<g>
<rect x="640" y="57" width="14" height="14" fill="#000"/>
<rect x="641.3" y="58" width="11.8" height="12" fill="#808000"/>
<rect x="643" y="57.6" width="8.2" height="6.6" fill="#000"/>
<rect x="643.4" y="58" width="7.4" height="5.8" fill="#f4f4f4"/>
<rect x="643" y="65.8" width="9" height="4.6" fill="#000"/>
<rect x="649" y="67" width="2.2" height="2.8" fill="#fff"/>
<rect x="652" y="58" width="1" height="1" fill="#fff"/>
<rect x="642.2" y="58" width="0.7" height="12" fill="#000" opacity="0.5"/>
<rect x="652" y="60" width="0.7" height="10" fill="#000" opacity="0.5"/>
</g>
<!-- printer -->
<g stroke="#000" stroke-width="1" fill="#fff" stroke-linejoin="round">
<path d="M757.5 64.5 L759.3 61.3 L761 62.8 V67 L757.5 70.5 Z" fill="#c4c4c4" stroke-width="0.9"/>
<path d="M749.7 57.4 H759 L756.6 62.5 H747.8 Z" stroke-width="0.9"/>
<path d="M747.8 62.5 L745.8 64.5 H757.5 L756.6 62.5" stroke-width="0.9"/>
<rect x="745.5" y="64.5" width="12" height="6" rx="1.2"/>
</g>
<g fill="#000" shape-rendering="crispEdges">
<rect x="746" y="66" width="11" height="1"/>
<rect x="746" y="68.6" width="11" height="0.9"/>
<rect x="751" y="59" width="6" height="0.8"/>
<rect x="750.4" y="60.7" width="5.6" height="0.8"/>
</g>
<rect x="752" y="67" width="3" height="1.4" fill="#ffe000"/>
<!-- arrows -->
<path d="M876.7 57.3 L884 64.5 H880.1 V69.9 H873.3 V64.5 H869.2 Z" fill="#008000" stroke="#000" stroke-width="0.8"/>
<path d="M977.1 58.2 H983.9 V63.3 H987.8 L980.5 70.6 L973.2 63.3 H977.1 Z" fill="#008000" stroke="#000" stroke-width="0.8"/>
<!-- copy -->
<g fill="#fff" stroke-width="1.1">
<path d="M1079.5 57.6 H1084 L1086 59.6 V66.3 H1079.5 Z" stroke="#000"/>
<g fill="#000" stroke="none" shape-rendering="crispEdges"><rect x="1081" y="60" width="3.6" height="0.9"/><rect x="1081" y="62" width="3.6" height="0.9"/><rect x="1081" y="64" width="3.6" height="0.9"/></g>
<path d="M1085.8 60.7 H1091 L1093.5 63.2 V69.1 H1085.8 Z" stroke="#000080"/>
<g fill="#000080" stroke="none" shape-rendering="crispEdges"><rect x="1087.4" y="63.6" width="4" height="0.9"/><rect x="1087.4" y="65.4" width="4.6" height="0.9"/><rect x="1087.4" y="67.1" width="4.6" height="0.9"/></g>
</g>
<!-- filter -->
<path d="M1184.5 58.6 H1198.5 L1192.5 65 V71.2 H1190.2 V65 Z" fill="#fff" stroke="#000" stroke-width="1.1" stroke-linejoin="round"/>
<path d="M1289.7 58.9 H1303.4 L1297.9 65 V71.3 H1295.6 V65 Z" fill="#f8f8f8" stroke="#a5a5a5" stroke-width="1.1" stroke-linejoin="round"/>
<path d="M1293 59 H1303 L1297.8 64 H1296 Z" fill="#a5a5a5"/>
<path d="M1394 61.8 H1398 V66 Z" fill="#008000"/>
<!-- caption buttons -->
<g stroke="#1a1a1a" stroke-width="1.1" fill="none">
<path d="M1244.2 27.3 H1255.8"/>
<rect x="1302.4" y="22.4" width="11.2" height="11.2" rx="1.8"/>
<path d="M1361.2 22.3 L1372.8 33.8 M1372.8 22.3 L1361.2 33.8"/>
</g>

 </svg>
</div><div style="position:absolute;left:0;top:0;right:0;bottom:0;border:1px solid rgba(0,0,0,0.28);border-radius:8px;box-sizing:border-box"></div></div>
</body></html>
